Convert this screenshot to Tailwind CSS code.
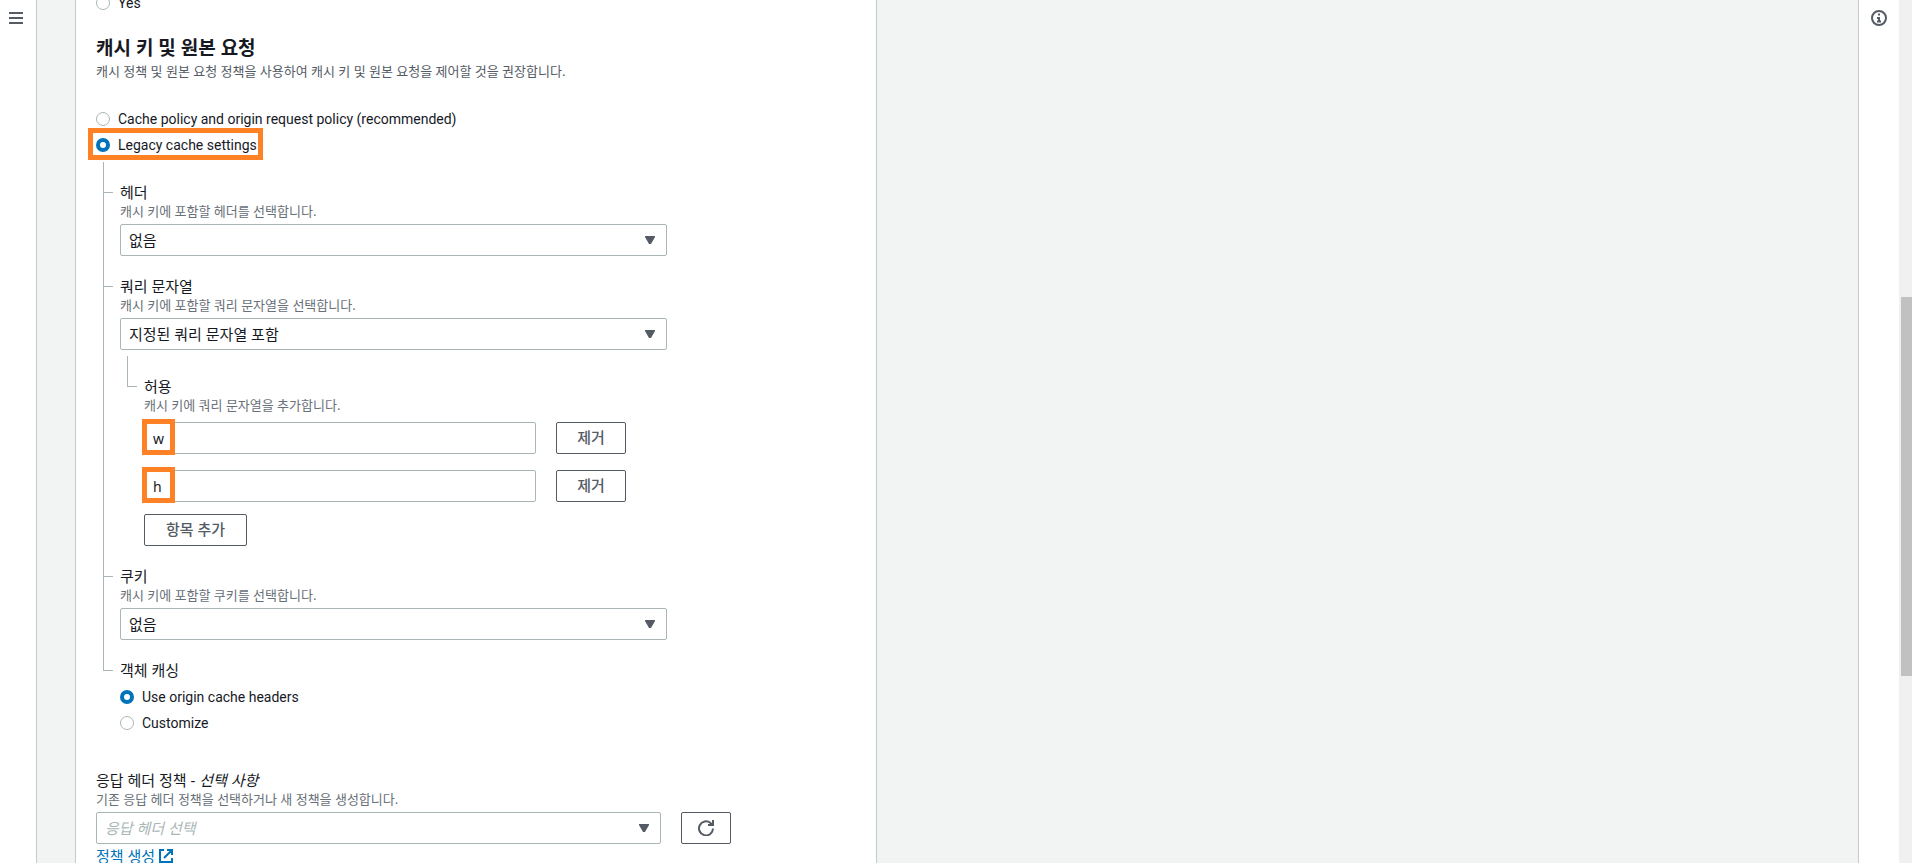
<!DOCTYPE html>
<html lang="ko">
<head>
    <meta charset="UTF-8">
    <meta name="viewport" content="width=device-width, initial-scale=1.0">
    <title>CloudFront</title>
    <script src="https://cdn.jsdelivr.net/npm/@tailwindcss/browser@4"></script>
</head>
<body class="h-screen overflow-hidden flex bg-[#f2f3f3] text-[#16191f] text-[15px] leading-5 font-['Noto_Sans','Noto_Sans_CJK_KR',sans-serif]">
    <!-- Left navigation rail -->
    <nav class="w-[37px] shrink-0 bg-white border-r border-[#c3cccc] pt-3 pl-2">
        <button type="button" aria-label="메뉴" class="block">
            <svg class="w-4 h-3 block" viewBox="0 0 16 12" fill="#545b64"><path d="M1 0h14v2H1zM1 5h14v2H1zM1 10h14v2H1z"/></svg>
        </button>
    </nav>

    <!-- Form content -->
    <main class="flex-1 pl-[38px] overflow-hidden">
        <form class="w-[802px] min-h-full bg-white border-x border-[#c3cccc] px-5 -mt-2">
            <label class="flex items-center gap-2 h-[22px] text-sm font-[Roboto,sans-serif]">
                <input type="radio" name="restrict" class="appearance-none size-3.5 rounded-full border border-[#aab7b8] bg-white checked:border-4 checked:border-[#0073bb]">
                Yes
            </label>

            <h2 class="mt-[22px] text-[19px] leading-6 font-bold">캐시 키 및 원본 요청</h2>
            <p class="mt-0.5 text-[13px] leading-[18px] text-[#545b64]">캐시 정책 및 원본 요청 정책을 사용하여 캐시 키 및 원본 요청을 제어할 것을 권장합니다.</p>

            <div class="mt-7 flex flex-col items-start gap-1">
                <label class="flex items-center gap-2 h-[22px] text-sm font-[Roboto,sans-serif]">
                    <input type="radio" name="cache" class="appearance-none size-3.5 rounded-full border border-[#aab7b8] bg-white checked:border-4 checked:border-[#0073bb]">
                    Cache policy and origin request policy (recommended)
                </label>
                <label class="relative flex items-center gap-2 h-[22px] text-sm font-[Roboto,sans-serif]">
                    <input type="radio" name="cache" checked class="appearance-none size-3.5 rounded-full border border-[#aab7b8] bg-white checked:border-4 checked:border-[#0073bb]">
                    Legacy cache settings
                    <span class="absolute -left-2 -right-1.5 -top-1.5 -bottom-1 border-5 border-[#ff8126]"></span>
                </label>
            </div>

            <!-- Legacy settings tree -->
            <ul class="mt-1.5">
                <li class="grid grid-cols-[24px_1fr]">
                    <div class="flex flex-col mx-[7px]">
                        <div class="h-[31px] border-l border-b border-[#aab7b8]"></div>
                        <div class="flex-1 border-l border-[#aab7b8]"></div>
                    </div>
                    <div class="pt-5 w-[547px]">
                        <label for="headers" class="block">헤더</label>
                        <p class="text-[13px] leading-[18px] text-[#687078]">캐시 키에 포함할 헤더를 선택합니다.</p>
                        <div class="relative mt-1">
                            <select id="headers" class="block appearance-none w-full h-8 px-2 rounded-xs border border-[#aab7b8] bg-white">
                                <option>없음</option>
                            </select>
                            <svg class="absolute right-3 top-3 w-2.5 h-2 pointer-events-none" viewBox="0 0 10 8" fill="#545b64"><path d="M0 0h10v1L6 8H4L0 1z"/></svg>
                        </div>
                    </div>
                </li>
                <li class="grid grid-cols-[24px_1fr]">
                    <div class="flex flex-col mx-[7px]">
                        <div class="h-[31px] border-l border-b border-[#aab7b8]"></div>
                        <div class="flex-1 border-l border-[#aab7b8]"></div>
                    </div>
                    <div class="pt-5 w-[547px]">
                        <label for="query" class="block">쿼리 문자열</label>
                        <p class="text-[13px] leading-[18px] text-[#687078]">캐시 키에 포함할 쿼리 문자열을 선택합니다.</p>
                        <div class="relative mt-1">
                            <select id="query" class="block appearance-none w-full h-8 px-2 rounded-xs border border-[#aab7b8] bg-white">
                                <option>지정된 쿼리 문자열 포함</option>
                            </select>
                            <svg class="absolute right-3 top-3 w-2.5 h-2 pointer-events-none" viewBox="0 0 10 8" fill="#545b64"><path d="M0 0h10v1L6 8H4L0 1z"/></svg>
                        </div>

                        <!-- Allow list -->
                        <div class="mt-1.5 grid grid-cols-[24px_1fr]">
                            <div class="mx-[7px]">
                                <div class="h-[31px] border-l border-b border-[#aab7b8]"></div>
                            </div>
                            <div class="pt-5">
                                <h3>허용</h3>
                                <p class="text-[13px] leading-[18px] text-[#687078]">캐시 키에 쿼리 문자열을 추가합니다.</p>
                                <div class="mt-2 flex flex-col gap-4">
                                    <div class="flex gap-5">
                                        <div class="relative w-[392px]">
                                            <input type="text" value="w" aria-label="쿼리 문자열 1" class="block w-full h-8 px-2 rounded-xs border border-[#aab7b8] text-sm">
                                            <span class="absolute -left-0.5 -top-[3px] w-[33px] h-9 border-5 border-[#ff8126]"></span>
                                        </div>
                                        <button type="button" class="w-[70px] h-8 pb-0.5 rounded-xs border border-[#545b64] text-[#545b64] font-medium">제거</button>
                                    </div>
                                    <div class="flex gap-5">
                                        <div class="relative w-[392px]">
                                            <input type="text" value="h" aria-label="쿼리 문자열 2" class="block w-full h-8 px-2 rounded-xs border border-[#aab7b8] text-sm">
                                            <span class="absolute -left-0.5 -top-[3px] w-[33px] h-9 border-5 border-[#ff8126]"></span>
                                        </div>
                                        <button type="button" class="w-[70px] h-8 pb-0.5 rounded-xs border border-[#545b64] text-[#545b64] font-medium">제거</button>
                                    </div>
                                </div>
                                <button type="button" class="block mt-3 w-[103px] h-8 pb-0.5 rounded-xs border border-[#545b64] text-[#545b64] font-medium">항목 추가</button>
                            </div>
                        </div>
                    </div>
                </li>
                <li class="grid grid-cols-[24px_1fr]">
                    <div class="flex flex-col mx-[7px]">
                        <div class="h-[31px] border-l border-b border-[#aab7b8]"></div>
                        <div class="flex-1 border-l border-[#aab7b8]"></div>
                    </div>
                    <div class="pt-5 w-[547px]">
                        <label for="cookies" class="block">쿠키</label>
                        <p class="text-[13px] leading-[18px] text-[#687078]">캐시 키에 포함할 쿠키를 선택합니다.</p>
                        <div class="relative mt-1">
                            <select id="cookies" class="block appearance-none w-full h-8 px-2 rounded-xs border border-[#aab7b8] bg-white">
                                <option>없음</option>
                            </select>
                            <svg class="absolute right-3 top-3 w-2.5 h-2 pointer-events-none" viewBox="0 0 10 8" fill="#545b64"><path d="M0 0h10v1L6 8H4L0 1z"/></svg>
                        </div>
                    </div>
                </li>
                <li class="grid grid-cols-[24px_1fr]">
                    <div class="mx-[7px]">
                        <div class="h-[31px] border-l border-b border-[#aab7b8]"></div>
                    </div>
                    <div class="pt-5">
                        <h3>객체 캐싱</h3>
                        <div class="mt-1.5 flex flex-col items-start gap-1">
                            <label class="flex items-center gap-2 h-[22px] text-sm font-[Roboto,sans-serif]">
                                <input type="radio" name="object" checked class="appearance-none size-3.5 rounded-full border border-[#aab7b8] bg-white checked:border-4 checked:border-[#0073bb]">
                                Use origin cache headers
                            </label>
                            <label class="flex items-center gap-2 h-[22px] text-sm font-[Roboto,sans-serif]">
                                <input type="radio" name="object" class="appearance-none size-3.5 rounded-full border border-[#aab7b8] bg-white checked:border-4 checked:border-[#0073bb]">
                                Customize
                            </label>
                        </div>
                    </div>
                </li>
            </ul>

            <!-- Response headers policy -->
            <div class="mt-9">
                <label for="policy" class="block">응답 헤더 정책 - <i>선택 사항</i></label>
                <p class="text-[13px] leading-[18px] text-[#687078]">기존 응답 헤더 정책을 선택하거나 새 정책을 생성합니다.</p>
                <div class="mt-1 flex gap-5">
                    <div class="relative w-[565px]">
                        <select id="policy" class="block appearance-none w-full h-8 px-2 rounded-xs border border-[#aab7b8] bg-white text-[#aab7b8] italic">
                            <option>응답 헤더 선택</option>
                        </select>
                        <svg class="absolute right-3 top-3 w-2.5 h-2 pointer-events-none" viewBox="0 0 10 8" fill="#545b64"><path d="M0 0h10v1L6 8H4L0 1z"/></svg>
                    </div>
                    <button type="button" aria-label="새로 고침" class="w-[50px] h-8 rounded-xs border border-[#545b64] flex items-center justify-center">
                        <svg class="size-4" viewBox="0 0 16 16" fill="none" stroke="#545b64" stroke-width="2"><path d="M15 8.500A7 7 0 1 1 12.500 3L15 5"/><path fill="#545b64" stroke="none" d="M16 0v6h-6V4h4V0z"/></svg>
                    </button>
                </div>
                <a href="#" class="mt-0.5 inline-flex items-center gap-1 text-[#0073bb]">
                    정책 생성
                    <svg class="size-3.5" viewBox="0 0 14 14" fill="none" stroke="#0073bb" stroke-width="2"><path d="M5 1H1v12h12V9M8 1h5v5M13 1L5 9"/></svg>
                </a>
            </div>
        </form>
    </main>

    <!-- Help rail -->
    <aside class="w-[41px] shrink-0 bg-white border-l border-[#c3cccc] pt-2.5 pl-3">
        <button type="button" aria-label="정보" class="block">
            <svg class="size-4 block" viewBox="0 0 16 16" fill="none" stroke="#545b64" stroke-width="2"><circle cx="8" cy="8" r="7"/><path d="M7 4.500h2M6 8h2v3.500M6 11.500h4"/></svg>
        </button>
    </aside>

    <!-- Scroll track -->
    <div class="w-[13px] shrink-0 bg-[#f0f0f0] pl-0.5 pt-[297px]">
        <div class="h-[379px] bg-[#c1c1c1]"></div>
    </div>
</body>
</html>
